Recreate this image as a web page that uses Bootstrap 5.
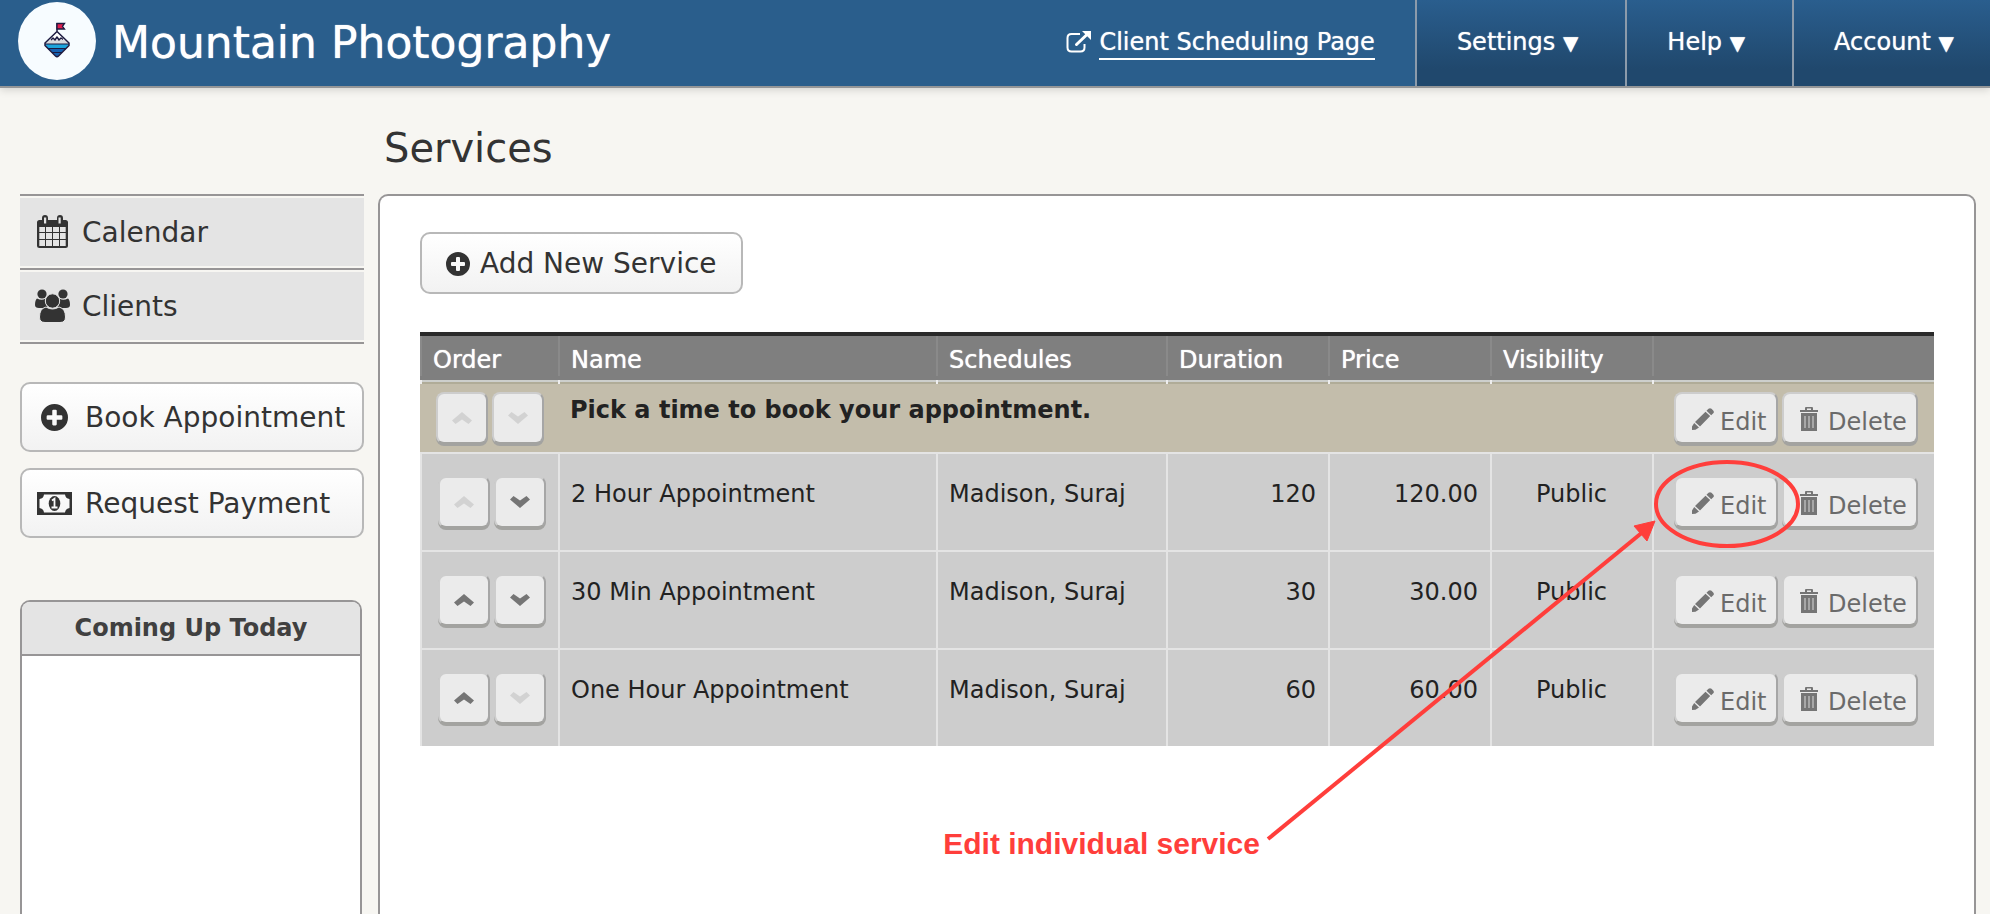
<!DOCTYPE html>
<html lang="en">
<head>
<meta charset="utf-8">
<meta name="viewport" content="width=device-width, initial-scale=1">
<title>Mountain Photography – Services</title>
<link href="https://cdn.jsdelivr.net/npm/bootstrap@5.3.0/dist/css/bootstrap.min.css" rel="stylesheet">
<style>
  body { background: #f7f6f2; color: #333; font-family: "DejaVu Sans", Verdana, sans-serif; font-size: 24px; line-height: 30px; }
  .icon { display: block; flex: none; fill: currentColor; }

  /* Top bar */
  .topbar { background: #2a5e8c; border-bottom: 2px solid #949698; box-shadow: 0 2px 8px rgba(0,0,0,.15); color: #fff; height: 88px; }
  .logo { width: 78px; height: 78px; margin: 2px 16px 0 18px; border-radius: 50%; background: #f7fcff; }
  .site-title { font-size: 44px; line-height: 50px; margin: 18px 0 0; text-shadow: 0 0 1px #fff; }
  .topbar a, .menu-btn { color: #fff; text-decoration: none; text-shadow: 0 0 1px rgba(255,255,255,.8); }
  .page-link-out { padding: 27px 40px 0 0; }
  .page-link-out span { border-bottom: 2px solid #fff; height: 33px; }
  .menu-btn { border: 0; border-left: 2px solid #8c9bab; background: linear-gradient(#2a5e8e, #20486d 80%); padding: 0 47px 2px 40px; white-space: nowrap; }
  .menu-btn:last-child { padding-right: 36px; }
  .menu-btn span { font-size: 20px; }

  /* Left column */
  .sidebar { width: 344px; margin: 106px 14px 0 20px; }
  .side-nav { border-top: 2px solid #979596; margin-bottom: 38px; font-size: 28px; }
  .side-nav a { display: flex; align-items: center; gap: 12px; height: 68px; margin: 2px 0; padding: 2px 14px 0; background: #e4e4e4; color: #333; text-decoration: none; }
  .side-nav li { border-bottom: 2px solid #979596; overflow: hidden; }
  .side-nav .icon-slot { padding-bottom: 4px; }
  .big-btn { display: flex; align-items: center; gap: 13px; border: 2px solid #b8b8b8; border-radius: 10px; background: linear-gradient(#fff, #f2f2f2); color: #333; font-size: 28px; line-height: 36px; text-align: left; white-space: nowrap; }
  .sidebar .big-btn { width: 100%; height: 70px; padding: 2px 14px 0; }
  .icon-slot { width: 36px; flex: none; display: flex; justify-content: center; padding-bottom: 2px; }
  .today { margin: 62px 2px 0 0; border: 2px solid #979596; border-bottom: 0; border-radius: 10px 10px 0 0; background: #fff; overflow: hidden; flex: 1; min-height: 240px; }
  .today h2 { margin: 0; padding: 11px 0; border-bottom: 2px solid #979596; background: #e4e4e4; color: #404040; font-size: 24px; line-height: 30px; font-weight: 700; text-align: center; }

  /* Main panel */
  .page { min-height: calc(100vh - 88px); }
  .main-col { margin-right: 14px; min-width: 0; }
  .main-col h1 { font-size: 40px; line-height: 50px; margin: 35px 0 21px 6px; }
  .panel { border: 2px solid #979596; border-bottom: 0; border-radius: 10px 10px 0 0; background: #fff; padding: 36px 40px 0; }
  .add-btn { height: 62px; gap: 10px; padding: 2px 24px 0; margin-bottom: 38px; }

  .services { width: 100%; margin: 0; border-collapse: separate; border-spacing: 0; table-layout: fixed; color: #222; }
  .services th, .services td { vertical-align: top; }
  .services th { position: relative; padding: 13px 12px 5px 13px; background: linear-gradient(#2a2a2a 4px, #7f7f7f 4px); border-bottom: 2px solid #cdcfcc; color: #fff; font-weight: 400; text-shadow: 0 0 1px #fff; }
  .services th::before { content: ""; position: absolute; left: 0; top: 4px; bottom: 4px; width: 2px; background: #8a8a8a; }
  .services th::after { content: ""; position: absolute; left: 0; bottom: -4px; height: 4px; width: 2px; background: #eee; z-index: 1; }
  .services td { background: #cdcdcd; border: 0 solid #e4e4e4; border-width: 2px 0 0 2px; padding: 25px 12px 0 11px; }
  .services td.tools-left { padding: 22px 0 22px 16px; }
  .services td.tools-right { padding: 22px 0 22px 20px; }
  .services .category td { background: #c3bdab; border-color: #b0ac98 transparent; border-left-width: 0; padding: 11px 12px 0; }
  .services .category td.tools-left { padding: 8px 0 8px 16px; }
  .services .category td.tools-right { padding: 8px 0 8px 22px; }

  .key { display: flex; height: 52px; border: 2px solid; border-color: #cdcdcd #a6a6a6 #a3a3a0 #cdcdcd; border-radius: 8px; box-shadow: 0 2px 0 #a3a3a0; background: #ebebeb; color: #6a6a6a; line-height: 30px; padding: 13px 0 0 16px; gap: 6px; }
  .key .icon { color: #757575; }
  .key-move { width: 52px; padding: 0; align-items: center; justify-content: center; }
  .key-move:disabled .icon { color: #d2d2d2; }
  .key-edit { width: 104px; }
  .key-del { width: 136px; gap: 10px; }

  /* Callout laid over the table */
  .callout { position: absolute; right: 130px; top: 124px; pointer-events: none; color: #ff3e3b; z-index: 2; }
  .callout p { margin: 0; font: 700 30px/36px "Liberation Sans", Arial, sans-serif; white-space: nowrap; }
</style>
</head>
<body>

<svg width="0" height="0" class="position-absolute" aria-hidden="true">
  <symbol id="i-plus" viewBox="0 0 24 24"><path fill-rule="evenodd" d="M12 0a12 12 0 1 0 0 24a12 12 0 0 0 0-24zM11 5h2q1 0 1 1v4h4q1 0 1 1v2q0 1-1 1h-4v4q0 1-1 1h-2q-1 0-1-1v-4h-4q-1 0-1-1v-2q0-1 1-1h4v-4q0-1 1-1z"/></symbol>
  <symbol id="i-up" viewBox="0 0 20 12"><path d="M10 0L20 8.500 16.500 12 10 7.500 3.500 12 0 8.500z"/></symbol>
  <symbol id="i-down" viewBox="0 0 20 12"><path d="M10 12L20 3.500 16.500 0 10 4.500 3.500 0 0 3.500z"/></symbol>
  <symbol id="i-pencil" viewBox="0 0 22 22"><path d="M0 22v-3.500L2.200 15 7 19.500 3.500 21.800zM3 14L13.500 3.800 18.200 8 8 18.500zM14.500 2.800L16.500 .8q1.500-1.300 3 0l1.500 1.500q1.500 1.500 .5 2.800L19.200 7.200z"/></symbol>
  <symbol id="i-trash" viewBox="0 0 18 24"><path fill-rule="evenodd" d="M5 3V1q0-1 1-1h6q1 0 1 1v2h5v2H0V3zM7 3h4V1.500H7zM1 6h16v18H1z"/><path d="M5 9v12M9 9v12M13 9v12" stroke="#b8b8b8" stroke-width="1.500"/></symbol>
</svg>

<header class="topbar d-flex position-relative">
  <svg class="logo icon" viewBox="0 0 78 78" aria-hidden="true">
    <path d="M39 29L27.500 41h23z" fill="#fff"/>
    <path d="M30 38h18l3 4H27z" fill="#d8dade"/>
    <path d="M27 42h24l-4 6H31z" fill="#1ca4dc"/>
    <path d="M31 47h16l-8 8z" fill="#1560b0"/>
    <path d="M27 42h24M30 46.500h18M34 50.500h10" stroke="#1c1a40" stroke-width="1.200"/>
    <path d="M39 21v8M39 29.500L27 41v2.500l10.500 10.500q1.500 1.500 3 0L51 43.500V41zM33 38l2-2 2 2 2-3 2 3 2-2 2 1.500" fill="none" stroke="#1c1a40" stroke-width="1.500" stroke-linejoin="round"/>
    <path d="M39 21.500h7.500l-2 2.800 2 2.700H39z" fill="#e01e4f" stroke="#1c1a40" stroke-width="1.300"/>
  </svg>
  <div class="site-title">Mountain Photography</div>
  <nav class="d-flex ms-auto" aria-label="Account">
    <a href="#" class="page-link-out d-flex">
      <svg class="icon me-2 mt-1" width="25" height="22" viewBox="0 0 25 22" aria-hidden="true"><path d="M14 3H5.500Q1.500 3 1.500 7v9.500q0 4 4 4h9q4 0 4-4V13" fill="none" stroke="#fff" stroke-width="2"/><path d="M10.500 13.500L21 3.500" stroke="#fff" stroke-width="3" stroke-linecap="round"/><path d="M16 0h9v9z"/></svg>
      <span>Client Scheduling Page</span>
    </a>
    <button type="button" class="menu-btn">Settings <span>▼</span></button>
    <button type="button" class="menu-btn">Help <span>▼</span></button>
    <button type="button" class="menu-btn">Account <span>▼</span></button>
  </nav>
</header>

<div class="page d-flex">
  <aside class="sidebar d-flex flex-column flex-shrink-0">
    <ul class="side-nav list-unstyled">
      <li><a href="#"><span class="icon-slot"><svg class="icon" width="31" height="33" viewBox="0 0 31 33" aria-hidden="true"><path fill-rule="evenodd" d="M2.500 5H5V3q0-3 3-3t3 3v2h9V3q0-3 3-3t3 3v2h2.500Q31 5 31 7.500v23q0 2.500-2.500 2.500h-26Q0 33 0 30.500v-23Q0 5 2.500 5zM7 2.500v6h2.200v-6zM21.500 2.500v6h2.200v-6zM2.300 12v5H8v-5zM9 12v5h6v-5zM16 12v5h6v-5zM23 12v5h5.700v-5zM2.300 18v6H8v-6zM9 18v6h6v-6zM16 18v6h6v-6zM23 18v6h5.700v-6zM2.300 25v6H8v-6zM9 25v6h6v-6zM16 25v6h6v-6zM23 25v6h5.700v-6z"/></svg></span>Calendar</a></li>
      <li><a href="#"><span class="icon-slot"><svg class="icon" width="35" height="33" viewBox="0 0 35 33" aria-hidden="true"><circle cx="7" cy="5" r="4.600"/><circle cx="28" cy="5" r="4.600"/><path d="M2 9.500q5 2.500 8.500 0-1 5 2 8.500-2 1-4 1H4q-4 0-4-3 0-5 2-6.500zM33 9.500q-5 2.500-8.500 0 1 5-2 8.500 2 1 4 1H31q4 0 4-3 0-5-2-6.500z"/><g stroke="#e4e4e4"><path d="M11 18q6.500 4 13 0 6.500 1.500 6.500 10 0 5.500-5.500 5.500H10q-5.500 0-5.500-5.500 0-8.500 6.500-10z"/><circle cx="17.500" cy="12" r="7.200"/></g></svg></span>Clients</a></li>
    </ul>
    <button type="button" class="big-btn mb-3"><span class="icon-slot"><svg class="icon" width="27" height="27" aria-hidden="true"><use href="#i-plus"/></svg></span>Book Appointment</button>
    <button type="button" class="big-btn"><span class="icon-slot"><svg class="icon" width="35" height="23" viewBox="0 0 35 23" aria-hidden="true"><path fill-rule="evenodd" d="M0 0h35v23H0zM7 2.500Q6.500 6.500 2.500 7v9q4 .5 4.500 4.500h21q.5-4 4.500-4.500V7q-4-.5-4.500-4.500z"/><ellipse cx="17.500" cy="11.500" rx="5.800" ry="7.500"/><path d="M15 8.500l2.500-1.700V15M14.500 15.500h6" fill="none" stroke="#fafafa" stroke-width="1.800"/></svg></span>Request Payment</button>
    <section class="today"><h2>Coming Up Today</h2></section>
  </aside>

  <main class="main-col flex-grow-1 d-flex flex-column">
    <h1 class="fw-normal">Services</h1>
    <div class="panel flex-grow-1">
      <button type="button" class="big-btn add-btn"><svg class="icon" width="24" height="24" aria-hidden="true"><use href="#i-plus"/></svg>Add New Service</button>

      <div class="position-relative">
        <table class="services">
          <colgroup><col style="width:138px"><col><col style="width:230px"><col style="width:162px"><col style="width:162px"><col style="width:162px"><col style="width:282px"></colgroup>
          <thead>
            <tr><th scope="col">Order</th><th scope="col">Name</th><th scope="col">Schedules</th><th scope="col">Duration</th><th scope="col">Price</th><th scope="col">Visibility</th><th scope="col" aria-label="Actions"></th></tr>
          </thead>
          <tbody>
            <tr class="category">
              <td class="tools-left"><div class="d-flex gap-1"><button type="button" class="key key-move" disabled aria-label="Move up"><svg class="icon" width="20" height="12"><use href="#i-up"/></svg></button><button type="button" class="key key-move" disabled aria-label="Move down"><svg class="icon" width="20" height="12"><use href="#i-down"/></svg></button></div></td>
              <td colspan="5"><strong>Pick a time to book your appointment.</strong></td>
              <td class="tools-right"><div class="d-flex gap-1"><button type="button" class="key key-edit"><svg class="icon" width="22" height="24"><use href="#i-pencil"/></svg>Edit</button><button type="button" class="key key-del"><svg class="icon" width="18" height="24"><use href="#i-trash"/></svg>Delete</button></div></td>
            </tr>
            <tr>
              <td class="tools-left"><div class="d-flex gap-1"><button type="button" class="key key-move" disabled aria-label="Move up"><svg class="icon" width="20" height="12"><use href="#i-up"/></svg></button><button type="button" class="key key-move" aria-label="Move down"><svg class="icon" width="20" height="12"><use href="#i-down"/></svg></button></div></td>
              <td>2 Hour Appointment</td><td>Madison, Suraj</td><td class="text-end">120</td><td class="text-end">120.00</td><td class="text-center">Public</td>
              <td class="tools-right"><div class="d-flex gap-1"><button type="button" class="key key-edit"><svg class="icon" width="22" height="24"><use href="#i-pencil"/></svg>Edit</button><button type="button" class="key key-del"><svg class="icon" width="18" height="24"><use href="#i-trash"/></svg>Delete</button></div></td>
            </tr>
            <tr>
              <td class="tools-left"><div class="d-flex gap-1"><button type="button" class="key key-move" aria-label="Move up"><svg class="icon" width="20" height="12"><use href="#i-up"/></svg></button><button type="button" class="key key-move" aria-label="Move down"><svg class="icon" width="20" height="12"><use href="#i-down"/></svg></button></div></td>
              <td>30 Min Appointment</td><td>Madison, Suraj</td><td class="text-end">30</td><td class="text-end">30.00</td><td class="text-center">Public</td>
              <td class="tools-right"><div class="d-flex gap-1"><button type="button" class="key key-edit"><svg class="icon" width="22" height="24"><use href="#i-pencil"/></svg>Edit</button><button type="button" class="key key-del"><svg class="icon" width="18" height="24"><use href="#i-trash"/></svg>Delete</button></div></td>
            </tr>
            <tr>
              <td class="tools-left"><div class="d-flex gap-1"><button type="button" class="key key-move" aria-label="Move up"><svg class="icon" width="20" height="12"><use href="#i-up"/></svg></button><button type="button" class="key key-move" disabled aria-label="Move down"><svg class="icon" width="20" height="12"><use href="#i-down"/></svg></button></div></td>
              <td>One Hour Appointment</td><td>Madison, Suraj</td><td class="text-end">60</td><td class="text-end">60.00</td><td class="text-center">Public</td>
              <td class="tools-right"><div class="d-flex gap-1"><button type="button" class="key key-edit"><svg class="icon" width="22" height="24"><use href="#i-pencil"/></svg>Edit</button><button type="button" class="key key-del"><svg class="icon" width="18" height="24"><use href="#i-trash"/></svg>Delete</button></div></td>
            </tr>
          </tbody>
        </table>

        <div class="callout d-flex align-items-end">
          <p>Edit individual service</p>
          <svg class="icon mb-3" width="544" height="390" viewBox="0 0 544 390" aria-hidden="true">
            <ellipse cx="467" cy="48" rx="71" ry="42" fill="none" stroke="currentColor" stroke-width="4"/>
            <path d="M8 383L384 75" stroke="currentColor" stroke-width="4"/>
            <path d="M395 65l-21 5 13 15z" stroke="currentColor"/>
          </svg>
        </div>
      </div>
    </div>
  </main>
</div>

<script src="https://cdn.jsdelivr.net/npm/bootstrap@5.3.0/dist/js/bootstrap.bundle.min.js"></script>
</body>
</html>
